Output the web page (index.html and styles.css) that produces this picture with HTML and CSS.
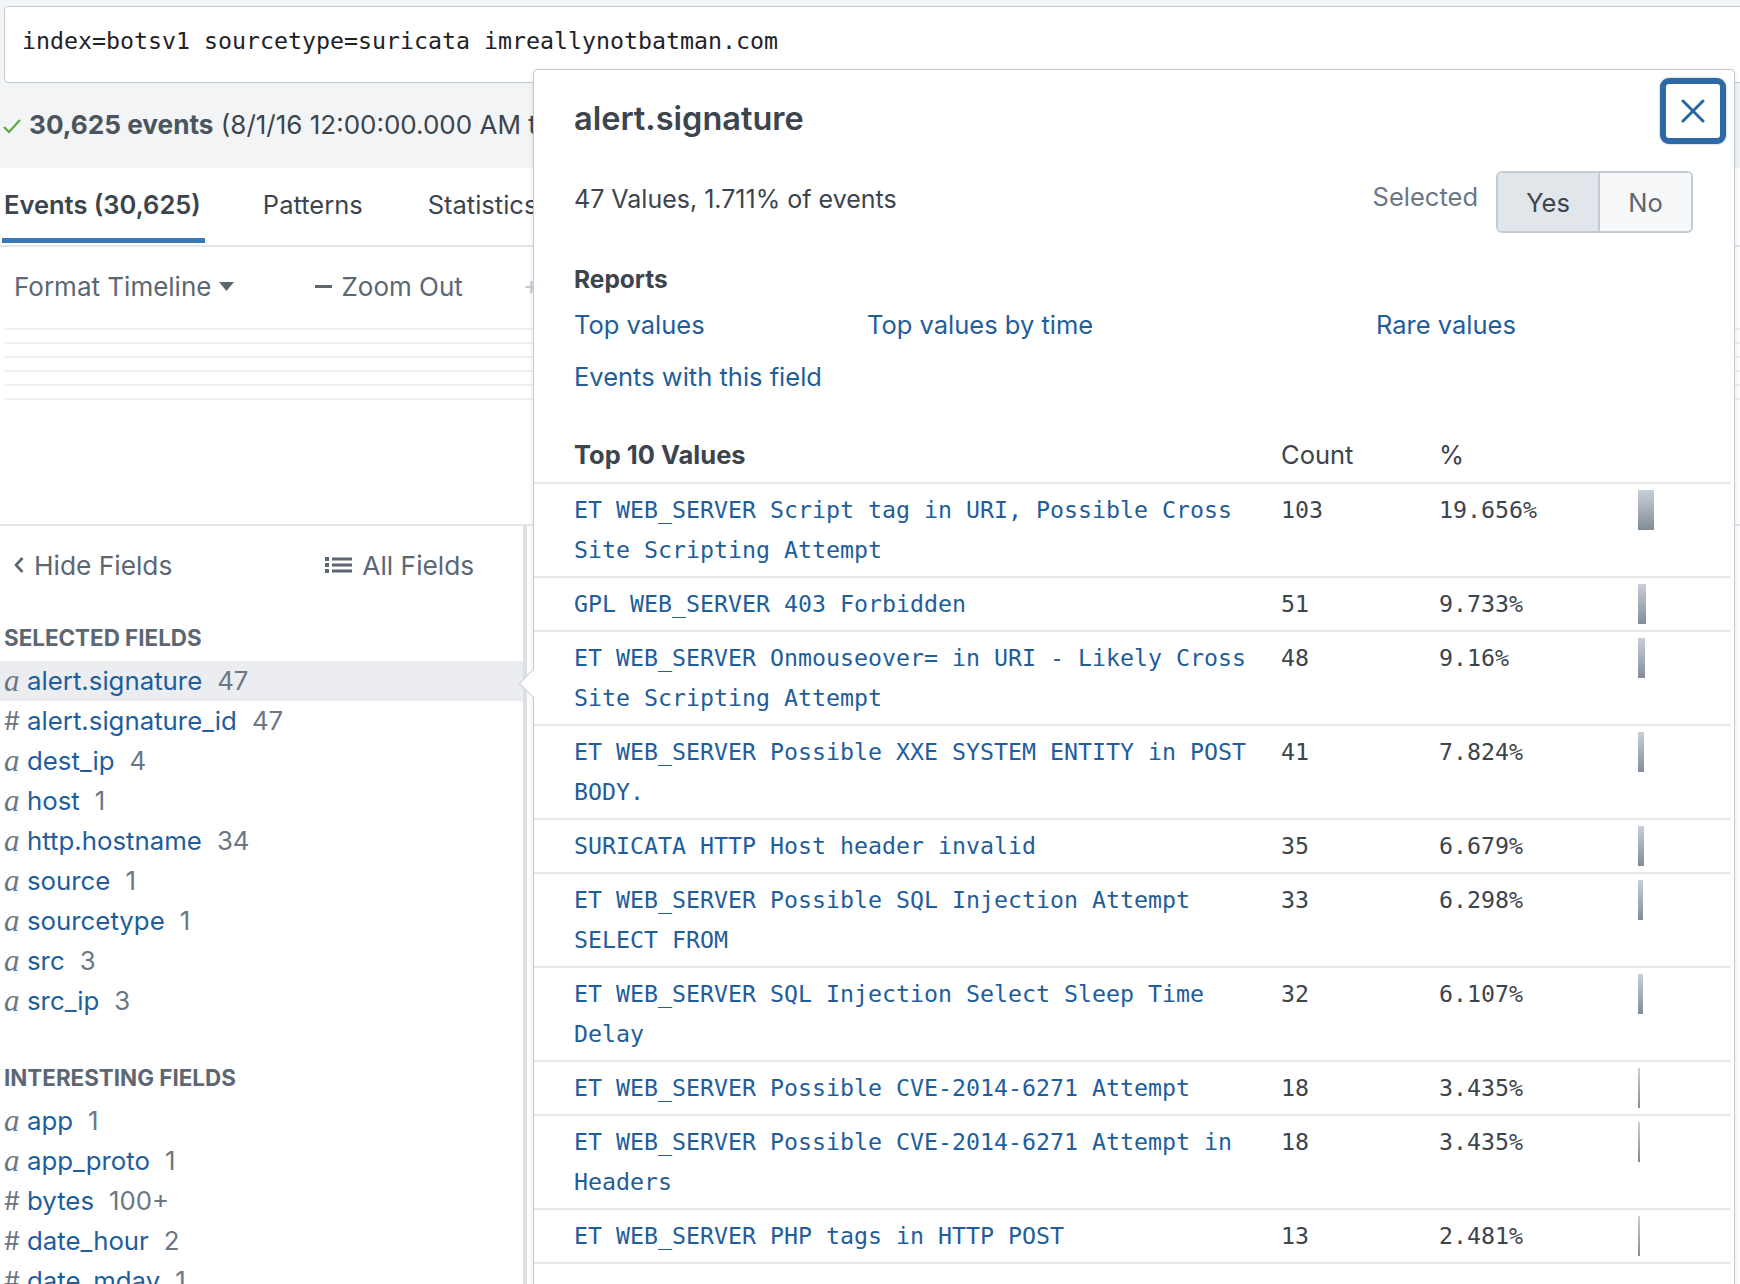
FILE: index.html
```html
<!DOCTYPE html>
<html>
<head>
<meta charset="utf-8">
<title>Search</title>
<link rel="stylesheet" href="styles.css">
</head>
<body>
<div class="page">
  <div class="top">
    <div class="search">index=botsv1 sourcetype=suricata imreallynotbatman.com</div>
    <div class="status">
      <svg class="check" width="20" height="18" viewBox="0 0 20 18"><polyline points="2,10 7,15 18,3" fill="none" stroke="#5fa83a" stroke-width="2.2"/></svg>
      <b>30,625 events</b>&nbsp;(8/1/16 12:00:00.000 AM to 9/1/16 12:00:00.000 AM)
    </div>
  </div>

  <div class="tabs">
    <div class="tab active">Events (30,625)</div>
    <div class="tab">Patterns</div>
    <div class="tab stats">Statistics</div>
    <div class="tab">Visualization</div>
  </div>

  <div class="tl-controls">
    <span class="tl-item">Format Timeline<svg class="caret" width="15" height="9" viewBox="0 0 15 9"><polygon points="0,0 15,0 7.5,9" fill="#5c6773"/></svg></span>
    <span class="tl-item zoomout"><span class="dash"></span>Zoom Out</span>
    <span class="tl-item disabled">+ Zoom to Selection</span>
  </div>
  <div class="tl-lines">
    <div class="tl-line"></div><div class="tl-line"></div><div class="tl-line"></div>
    <div class="tl-line"></div><div class="tl-line"></div><div class="tl-line"></div>
  </div>

  <div class="main">
    <div class="sidebar">
      <div class="sb-head">
        <span class="hide">
          <svg width="10" height="18" viewBox="0 0 10 18"><polyline points="8.5,2 2,9 8.5,16" fill="none" stroke="#5c6773" stroke-width="2.6"/></svg>
          Hide Fields
        </span>
        <span class="all">
          <svg width="27" height="20" viewBox="0 0 27 20"><rect x="0" y="2" width="4" height="4" fill="#5c6773"/><rect x="0" y="8" width="4" height="4" fill="#5c6773"/><rect x="0" y="14" width="4" height="4" fill="#5c6773"/><rect x="7" y="2.5" width="20" height="3" fill="#5c6773"/><rect x="7" y="8.5" width="20" height="3" fill="#5c6773"/><rect x="7" y="14.5" width="20" height="3" fill="#5c6773"/></svg>
          All Fields
        </span>
      </div>
      <div class="sb-title">SELECTED FIELDS</div>
      <ul class="fields">
        <li class="field selected"><span class="ty">a</span><span class="fname">alert.signature</span><span class="fcount">47</span></li>
        <li class="field"><span class="ty num">#</span><span class="fname">alert.signature_id</span><span class="fcount">47</span></li>
        <li class="field"><span class="ty">a</span><span class="fname">dest_ip</span><span class="fcount">4</span></li>
        <li class="field"><span class="ty">a</span><span class="fname">host</span><span class="fcount">1</span></li>
        <li class="field"><span class="ty">a</span><span class="fname">http.hostname</span><span class="fcount">34</span></li>
        <li class="field"><span class="ty">a</span><span class="fname">source</span><span class="fcount">1</span></li>
        <li class="field"><span class="ty">a</span><span class="fname">sourcetype</span><span class="fcount">1</span></li>
        <li class="field"><span class="ty">a</span><span class="fname">src</span><span class="fcount">3</span></li>
        <li class="field"><span class="ty">a</span><span class="fname">src_ip</span><span class="fcount">3</span></li>
      </ul>
      <div class="sb-title interesting">INTERESTING FIELDS</div>
      <ul class="fields">
        <li class="field"><span class="ty">a</span><span class="fname">app</span><span class="fcount">1</span></li>
        <li class="field"><span class="ty">a</span><span class="fname">app_proto</span><span class="fcount">1</span></li>
        <li class="field"><span class="ty num">#</span><span class="fname">bytes</span><span class="fcount">100+</span></li>
        <li class="field"><span class="ty num">#</span><span class="fname">date_hour</span><span class="fcount">2</span></li>
        <li class="field"><span class="ty num">#</span><span class="fname">date_mday</span><span class="fcount">1</span></li>
      </ul>
    </div>
    <div class="sb-scroll"></div>
  </div>
</div>

<div class="popup">
  <div class="arrow"></div>
  <div class="pop-head">
    <h2 class="pop-title">alert.signature</h2>
    <button class="close" aria-label="Close">
      <svg width="24" height="24" viewBox="0 0 24 24"><path d="M2 2 L22 22 M22 2 L2 22" stroke="#2a65a3" stroke-width="3" stroke-linecap="round"/></svg>
    </button>
  </div>
  <div class="pop-info">
    <span class="summary">47 Values, 1.711% of events</span>
    <span class="sel-label">Selected</span>
    <div class="toggle"><span class="tg yes">Yes</span><span class="tg no">No</span></div>
  </div>
  <div class="reports-title">Reports</div>
  <div class="reports">
    <a class="link">Top values</a>
    <a class="link">Top values by time</a>
    <a class="link">Rare values</a>
    <a class="link">Events with this field</a>
  </div>

  <div class="vtable">
    <div class="vrow vhead"><span class="vt">Top 10 Values</span><span>Count</span><span>%</span><span></span></div>
    <div class="vrow"><span class="vv">ET WEB_SERVER Script tag in URI, Possible Cross Site Scripting Attempt</span><span class="vn">103</span><span class="vn">19.656%</span><span><span class="bar" style="width:16px"></span></span></div>
    <div class="vrow"><span class="vv">GPL WEB_SERVER 403 Forbidden</span><span class="vn">51</span><span class="vn">9.733%</span><span><span class="bar" style="width:8px"></span></span></div>
    <div class="vrow"><span class="vv">ET WEB_SERVER Onmouseover= in URI - Likely Cross Site Scripting Attempt</span><span class="vn">48</span><span class="vn">9.16%</span><span><span class="bar" style="width:7px"></span></span></div>
    <div class="vrow"><span class="vv">ET WEB_SERVER Possible XXE SYSTEM ENTITY in POST BODY.</span><span class="vn">41</span><span class="vn">7.824%</span><span><span class="bar" style="width:6px"></span></span></div>
    <div class="vrow"><span class="vv">SURICATA HTTP Host header invalid</span><span class="vn">35</span><span class="vn">6.679%</span><span><span class="bar" style="width:6px"></span></span></div>
    <div class="vrow"><span class="vv">ET WEB_SERVER Possible SQL Injection Attempt SELECT FROM</span><span class="vn">33</span><span class="vn">6.298%</span><span><span class="bar" style="width:5px"></span></span></div>
    <div class="vrow"><span class="vv">ET WEB_SERVER SQL Injection Select Sleep Time Delay</span><span class="vn">32</span><span class="vn">6.107%</span><span><span class="bar" style="width:5px"></span></span></div>
    <div class="vrow"><span class="vv">ET WEB_SERVER Possible CVE-2014-6271 Attempt</span><span class="vn">18</span><span class="vn">3.435%</span><span><span class="bar" style="width:2px"></span></span></div>
    <div class="vrow"><span class="vv">ET WEB_SERVER Possible CVE-2014-6271 Attempt in Headers</span><span class="vn">18</span><span class="vn">3.435%</span><span><span class="bar" style="width:2px"></span></span></div>
    <div class="vrow"><span class="vv">ET WEB_SERVER PHP tags in HTTP POST</span><span class="vn">13</span><span class="vn">2.481%</span><span><span class="bar" style="width:2px"></span></span></div>
  </div>
</div>
</body>
</html>
```
FILE: styles.css
```css
html, body {
  margin: 0;
  padding: 0;
}
body {
  width: 1740px;
  height: 1284px;
  overflow: hidden;
  position: relative;
  background: #ffffff;
  color: #3c444d;
  font-family: Inter, "Open Sans", sans-serif;
  font-size: 25.5px;
}
.page {
  width: 1740px;
  height: 1284px;
  overflow: hidden;
}

/* ---------- top area ---------- */
.top {
  background: #f2f4f5;
  height: 168px;
  box-sizing: border-box;
  padding: 6px 0 0 4px;
}
.search {
  width: 1760px;
  height: 77px;
  box-sizing: border-box;
  border: 1px solid #c3cbd4;
  border-radius: 4px;
  background: #ffffff;
  padding: 16px 0 0 17px;
  font-family: "DejaVu Sans Mono", monospace;
  font-size: 23.25px;
  line-height: 36px;
  color: #1e2226;
  white-space: nowrap;
}
.status {
  display: flex;
  align-items: center;
  margin-top: 23px;
  margin-left: -2px;
  height: 36px;
  white-space: nowrap;
  color: #3c444d;
  font-size: 26px;
}
.status b {
  font-weight: 700;
  font-size: 26.2px;
  color: #4b5560;
}
.check {
  margin-right: 7px;
  margin-top: 3px;
}

/* ---------- tabs ---------- */
.tabs {
  display: flex;
  gap: 56px;
  height: 77px;
  padding-left: 2px;
  border-bottom: 2px solid #e1e6eb;
  box-sizing: content-box;
}
.tab {
  height: 75px;
  box-sizing: border-box;
  padding: 19px 2px 0 2px;
  line-height: 36px;
  white-space: nowrap;
  color: #3c444d;
}
.tab.stats {
  margin-left: 5px;
}
.tab.active {
  font-weight: 600;
  font-size: 25.5px;
  border-bottom: 5px solid #3a78b8;
  padding-right: 4px;
}

/* ---------- timeline ---------- */
.tl-controls {
  display: flex;
  align-items: center;
  height: 36px;
  margin-top: 21px;
  padding-left: 14px;
  color: #5c6773;
  white-space: nowrap;
  font-size: 26px;
}
.tl-item {
  display: inline-flex;
  align-items: center;
}
.caret {
  margin-left: 8px;
  margin-top: 1px;
}
.zoomout {
  margin-left: 81px;
}
.dash {
  display: inline-block;
  width: 17px;
  height: 3px;
  background: #5c6773;
  margin-right: 9px;
}
.disabled {
  margin-left: 60px;
  color: #c3cbd4;
}
.tl-lines {
  margin-top: 24px;
  padding-left: 4px;
  display: flex;
  flex-direction: column;
  gap: 12px;
}
.tl-line {
  height: 2px;
  background: #eef0f2;
}

/* ---------- sidebar ---------- */
.main {
  margin-top: 124px;
  border-top: 2px solid #e1e6eb;
  display: flex;
  height: 760px;
}
.sidebar {
  width: 523px;
  flex: none;
}
.sb-scroll {
  width: 4px;
  background: #dde1e6;
  flex: none;
}
.sb-head {
  display: flex;
  align-items: center;
  height: 36px;
  margin-top: 21px;
  padding-left: 14px;
  color: #5c6773;
  font-size: 26.3px;
  white-space: nowrap;
}
.hide {
  display: inline-flex;
  align-items: center;
  gap: 10px;
}
.all {
  display: inline-flex;
  align-items: center;
  gap: 10px;
  margin-left: 153px;
}
.sb-title {
  margin-top: 40px;
  padding-left: 4px;
  height: 30px;
  line-height: 30px;
  font-size: 22.4px;
  font-weight: 700;
  color: #5c6773;
}
.sb-title.interesting {
  margin-top: 42px;
}
.fields {
  list-style: none;
  margin: 8px 0 0 0;
  padding: 0;
}
.field {
  height: 40px;
  line-height: 40px;
  display: flex;
  align-items: center;
  padding-left: 4px;
  white-space: nowrap;
  font-size: 25.8px;
}
.field.selected {
  background: #ebedf0;
}
.ty {
  width: 23px;
  flex: none;
  font-family: "Liberation Serif", "DejaVu Serif", serif;
  font-style: italic;
  font-size: 31px;
  color: #6b7785;
}
.ty.num {
  font-family: Inter, sans-serif;
  font-style: normal;
  font-size: 25px;
}
.fname {
  color: #1f5e9b;
}
.fcount {
  margin-left: 15px;
  color: #6b7785;
}

/* ---------- popup ---------- */
.popup {
  position: absolute;
  left: 533px;
  top: 69px;
  width: 1202px;
  height: 1240px;
  box-sizing: border-box;
  background: #ffffff;
  border: 1px solid #c3cbd4;
  border-radius: 4px;
  box-shadow: 0 2px 6px rgba(0, 0, 0, 0.10);
}
.arrow {
  position: absolute;
  left: -11.5px;
  top: 603px;
  width: 21px;
  height: 21px;
  background: #ffffff;
  border-left: 1px solid #c3cbd4;
  border-bottom: 1px solid #c3cbd4;
  box-sizing: border-box;
  transform: rotate(45deg);
}
.pop-head {
  display: flex;
  justify-content: space-between;
  align-items: flex-start;
  padding: 8px 8px 0 40px;
}
.pop-title {
  margin: 21px 0 0 0;
  font-size: 32.5px;
  line-height: 40px;
  font-weight: 600;
  color: #3c444d;
}
.close {
  width: 66px;
  height: 66px;
  box-sizing: border-box;
  border: 6px solid #2e69a6;
  border-radius: 9px;
  background: #ffffff;
  padding: 0;
  display: flex;
  align-items: center;
  justify-content: center;
  box-shadow: 0 0 2px rgba(46, 105, 166, 0.6);
}
.pop-info {
  display: flex;
  align-items: center;
  margin-top: 27px;
  padding: 0 41px 0 40px;
  height: 62px;
}
.summary {
  flex: 1;
  margin-top: -6px;
  font-size: 25px;
}
.sel-label {
  color: #6b7785;
  margin-right: 18px;
  margin-top: -12px;
}
.toggle {
  display: flex;
  height: 62px;
  box-sizing: border-box;
  border: 2px solid #c3cbd4;
  border-radius: 6px;
  overflow: hidden;
}
.tg {
  display: flex;
  align-items: center;
  justify-content: center;
}
.tg.yes {
  width: 100px;
  background: #e1e6eb;
  color: #3c444d;
  border-right: 2px solid #c3cbd4;
}
.tg.no {
  width: 91px;
  background: #f7f8fa;
  color: #5c6773;
}
.reports-title {
  margin-top: 28px;
  padding-left: 40px;
  line-height: 36px;
  font-weight: 700;
  font-size: 24.5px;
}
.reports {
  display: grid;
  grid-template-columns: 293px 509px auto;
  row-gap: 16px;
  margin-top: 10px;
  padding-left: 40px;
  line-height: 36px;
}
.link {
  color: #1f5e9b;
  white-space: nowrap;
}

/* ---------- values table ---------- */
.vtable {
  margin-top: 40px;
  margin-right: 4px;
}
.vrow {
  display: grid;
  grid-template-columns: 707px 158px 199px 1fr;
  padding: 6px 0 6px 40px;
  border-bottom: 2px solid #e4e8ec;
  line-height: 40px;
}
.vhead {
  padding: 0 0 7px 40px;
  font-size: 25.5px;
}
.vt {
  font-weight: 700;
}
.vv {
  font-family: "DejaVu Sans Mono", monospace;
  font-size: 23.25px;
  color: #1f5e9b;
  padding-right: 17px;
}
.vn {
  font-family: "DejaVu Sans Mono", monospace;
  font-size: 23.25px;
  color: #3c444d;
}
.bar {
  display: block;
  height: 40px;
  background: linear-gradient(#c9cfd7, #828d99);
}
```
